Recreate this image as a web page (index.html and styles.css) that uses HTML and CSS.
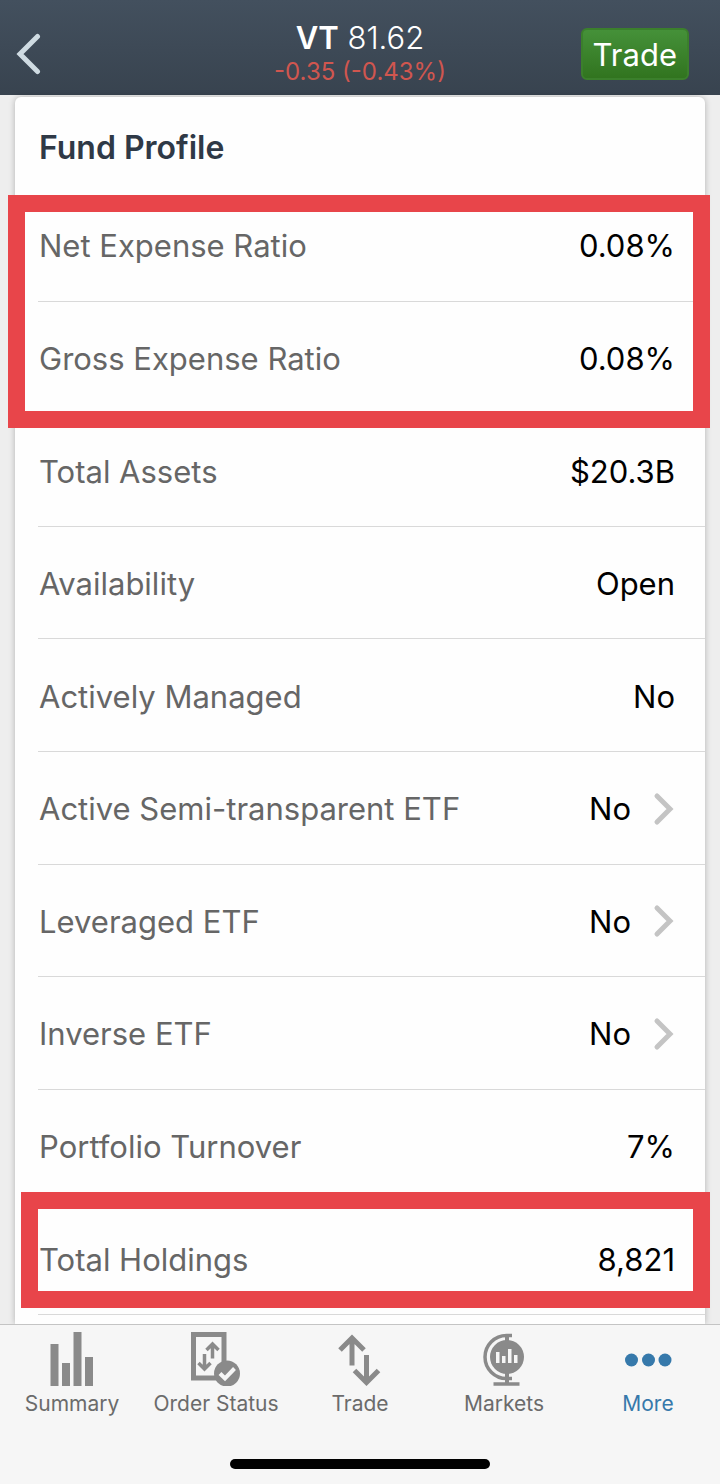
FILE: index.html
```html
<!DOCTYPE html>
<html lang="en">
<head>
<meta charset="utf-8">
<meta name="viewport" content="width=device-width, initial-scale=1">
<title>VT – Fund Profile</title>
<link rel="stylesheet" href="styles.css">
</head>
<body class="app">
<header class="topbar">
  <button class="back" type="button" aria-label="Back">
    <svg width="26" height="42" viewBox="0 0 26 42" fill="none" stroke="#cfdbe2" stroke-width="5" stroke-linecap="round" stroke-linejoin="miter"><path d="M21.500 3.500 4 21l17.500 17.500"/></svg>
  </button>
  <div class="quote">
    <h1 class="quote-title"><strong class="symbol">VT</strong> 81.62</h1>
    <p class="change">-0.35 (-0.43%)</p>
  </div>
  <button class="trade" type="button">Trade</button>
</header>

<main class="content">
  <section class="card">
    <h2 class="card-title">Fund Profile</h2>
    <dl class="group group-expenses">
      <div class="row"><dt>Net Expense Ratio</dt><dd>0.08%</dd></div>
      <div class="row"><dt>Gross Expense Ratio</dt><dd>0.08%</dd></div>
    </dl>
    <dl class="group group-details">
      <div class="row"><dt>Total Assets</dt><dd>$20.3B</dd></div>
      <div class="row"><dt>Availability</dt><dd>Open</dd></div>
      <div class="row"><dt>Actively Managed</dt><dd>No</dd></div>
      <div class="row"><dt>Active Semi-transparent ETF</dt><dd><a class="more-link" href="#semi">No <svg class="chevron" viewBox="0 0 22 34"><path d="M4 4l13 13L4 30"/></svg></a></dd></div>
      <div class="row"><dt>Leveraged ETF</dt><dd><a class="more-link" href="#leveraged">No <svg class="chevron" viewBox="0 0 22 34"><path d="M4 4l13 13L4 30"/></svg></a></dd></div>
      <div class="row"><dt>Inverse ETF</dt><dd><a class="more-link" href="#inverse">No <svg class="chevron" viewBox="0 0 22 34"><path d="M4 4l13 13L4 30"/></svg></a></dd></div>
      <div class="row"><dt>Portfolio Turnover</dt><dd>7%</dd></div>
    </dl>
    <dl class="group group-holdings">
      <div class="row"><dt>Total Holdings</dt><dd>8,821</dd></div>
    </dl>
  </section>
</main>

<footer class="bottom">
  <nav class="tabs" aria-label="Main">
    <a class="tab" href="#summary">
      <svg class="tab-icon" viewBox="0 0 56 56" fill="#8a8a8a"><path d="M6.500 14h8v42h-8zM18 33h8v23h-8zM29.500 2h8v54h-8zM41 27h8v29h-8z"/></svg>
      Summary
    </a>
    <a class="tab" href="#orders">
      <svg class="tab-icon" viewBox="0 0 56 56" fill="none" stroke="#8a8a8a">
        <path d="M5.500 4.500h30.500v43.500H5.500z" stroke-width="5"/>
        <path d="M24.500 28.500V14M18.500 20l6-6 6 6M16.500 24v14.500M10.500 33l6 6 6-6" stroke-width="3.500"/>
        <circle cx="39" cy="43.500" r="13" fill="#8a8a8a" stroke="none"/>
        <path d="M32 43.500l5 5 9.500-10" stroke="#f6f6f6" stroke-width="4"/>
      </svg>
      Order Status
    </a>
    <a class="tab" href="#trade">
      <svg class="tab-icon" viewBox="0 0 56 56" fill="none" stroke="#8a8a8a" stroke-width="5"><path d="M20 35.500V8M8 20 20 8l12 12M34.500 25v27M22.500 40.500l12 12 12-12"/></svg>
      Trade
    </a>
    <a class="tab" href="#markets">
      <svg class="tab-icon" viewBox="0 0 56 56" fill="none" stroke="#8a8a8a">
        <path d="M36 5.500h-5.500a21 21 0 0 0 0 43H36" stroke-width="3.500"/>
        <path d="M31 4v50" stroke-width="4"/>
        <path d="M17.500 54h26" stroke-width="3.500"/>
        <circle cx="31" cy="27" r="17" fill="#8a8a8a" stroke="none"/>
        <path d="M20 22h3.500v11H20zM26 26h3.500v7H26zM32 19h3.500v14H32zM38 25h3.500v8H38z" fill="#f6f6f6" stroke="none"/>
      </svg>
      Markets
    </a>
    <a class="tab tab-active" href="#more" aria-current="page">
      <svg class="tab-icon" viewBox="0 0 56 56" fill="#3679ab"><circle cx="11.500" cy="30" r="6.500"/><circle cx="28.500" cy="30" r="6.500"/><circle cx="45" cy="30" r="6.500"/></svg>
      More
    </a>
  </nav>
  <div class="home-indicator"></div>
</footer>
</body>
</html>
```
FILE: styles.css
```css
* { box-sizing: border-box; }

.app {
  margin: 0;
  min-height: 100vh;
  display: flex;
  flex-direction: column;
  background: #eeeeee;
  color: #000;
  font-family: Inter, "Liberation Sans", sans-serif;
  font-size: 31px;
}

.topbar {
  display: grid;
  grid-template-columns: 1fr auto 1fr;
  align-items: center;
  padding: 20px 31px 7px 16px;
  min-height: 95px;
  background: linear-gradient(#43505e, #38434f);
  color: #fff;
}

.back {
  justify-self: start;
  display: flex;
  padding: 0;
  border: 0;
  background: none;
}

.quote { text-align: center; padding-left: 15px; }

.quote-title {
  margin: 0;
  font-size: 31px;
  line-height: 36px;
  font-weight: 300;
}

.symbol { font-weight: 600; }

.change {
  margin: 0;
  font-size: 24px;
  line-height: 32px;
  color: #d0564f;
}

.trade {
  justify-self: end;
  padding: 0 10px;
  height: 52px;
  border: 2px solid #3b7f2c;
  border-radius: 6px;
  background: linear-gradient(#459139, #31741f);
  color: #fff;
  font: inherit;
}

.content {
  flex: 1;
  display: flex;
  flex-direction: column;
  padding: 2px 15px 0;
}

.card {
  flex: 1;
  display: flex;
  flex-direction: column;
  padding-bottom: 9px;
  border-radius: 6px 6px 0 0;
  background: #fefefe;
  box-shadow: 0 0 6px rgba(0, 0, 0, 0.25);
}

.card-title {
  margin: 0;
  padding: 31px 24px 21px;
  font-size: 32px;
  line-height: 40px;
  font-weight: 600;
  color: #2f3946;
}

.group {
  position: relative;
  display: flex;
  flex-direction: column;
  margin: 0;
  padding-left: 23px;
}

.group-expenses { flex: 2 1 0; }
.group-details { flex: 7 1 0; }
.group-holdings { flex: 1 1 0; }

/* Marker frames drawn over the highlighted rows */
.group-expenses::after,
.group-holdings::after {
  content: "";
  position: absolute;
  border: 17px solid #e8454a;
  pointer-events: none;
  z-index: 1;
}

.group-expenses::after { inset: 6px -5px -14px -7px; }
.group-holdings::after { inset: -10px -5px 7px 6px; }

.row {
  flex: 1 1 0;
  min-height: 80px;
  display: flex;
  align-items: center;
  justify-content: space-between;
  gap: 16px;
  padding: 2px 30px 0 1px;
  border-bottom: 1px solid #d9d9d9;
}

.row dt { color: #666; }
.row dd { margin: 0; }

.more-link {
  display: flex;
  align-items: center;
  gap: 22px;
  color: inherit;
  text-decoration: none;
}

.chevron {
  width: 22px;
  height: 34px;
  fill: none;
  stroke: #c4c4c4;
  stroke-width: 5;
  stroke-linecap: round;
}

.bottom {
  position: relative;
  z-index: 2;
  padding-bottom: 15px;
  border-top: 1px solid #c4c4c4;
  background: #f6f6f6;
}

.tabs { display: grid; grid-template-columns: repeat(5, 1fr); }

.tab {
  display: flex;
  flex-direction: column;
  align-items: center;
  gap: 6px;
  padding-top: 5px;
  font-size: 21px;
  line-height: 24px;
  color: #6b6b6b;
  text-decoration: none;
}

.tab-active { color: #3679ab; }
.tab-icon { width: 56px; height: 56px; }

.home-indicator {
  width: 36%;
  height: 10px;
  margin: 43px auto 0;
  border-radius: 5px;
  background: #000;
}
```
